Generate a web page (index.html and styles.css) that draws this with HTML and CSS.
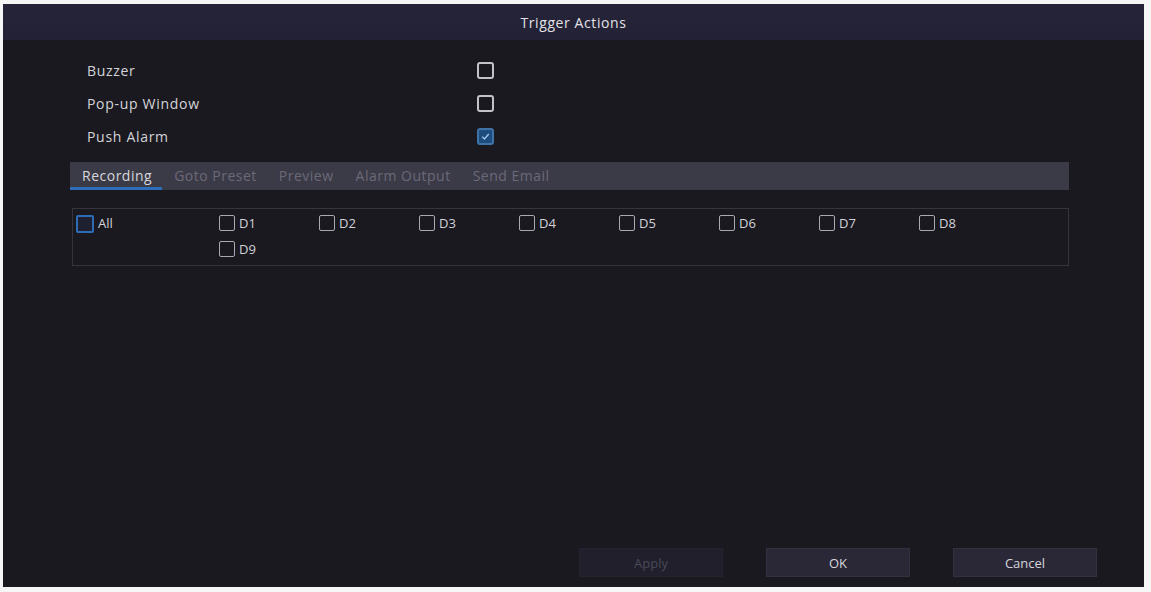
FILE: index.html
```html
<!DOCTYPE html>
<html>
<head>
<meta charset="utf-8">
<link rel="stylesheet" href="styles.css">
</head>
<body>
<div class="panel">
  <div class="header">Trigger Actions</div>
  <div class="content">
    <div class="options">
      <div class="opt-row"><span class="opt-label">Buzzer</span><span class="cb"></span></div>
      <div class="opt-row"><span class="opt-label">Pop-up Window</span><span class="cb"></span></div>
      <div class="opt-row"><span class="opt-label">Push Alarm</span><span class="cb cb-checked"><svg viewBox="0 0 16 16" width="16" height="16"><path d="M4 8.2 L6.8 11 L12 5" fill="none" stroke="#9cc3ea" stroke-width="1.8"/></svg></span></div>
    </div>
    <div class="tabs">
      <div class="tab active">Recording</div>
      <div class="tab">Goto Preset</div>
      <div class="tab">Preview</div>
      <div class="tab">Alarm Output</div>
      <div class="tab">Send Email</div>
    </div>
    <div class="channels">
      <div class="ch-all"><span class="ccb ccb-blue"></span><span class="ch-text">All</span></div>
      <div class="ch-list">
        <div class="ch"><span class="ccb"></span><span class="ch-text">D1</span></div>
        <div class="ch"><span class="ccb"></span><span class="ch-text">D2</span></div>
        <div class="ch"><span class="ccb"></span><span class="ch-text">D3</span></div>
        <div class="ch"><span class="ccb"></span><span class="ch-text">D4</span></div>
        <div class="ch"><span class="ccb"></span><span class="ch-text">D5</span></div>
        <div class="ch"><span class="ccb"></span><span class="ch-text">D6</span></div>
        <div class="ch"><span class="ccb"></span><span class="ch-text">D7</span></div>
        <div class="ch"><span class="ccb"></span><span class="ch-text">D8</span></div>
        <div class="ch"><span class="ccb"></span><span class="ch-text">D9</span></div>
      </div>
    </div>
    <div class="spacer"></div>
    <div class="buttons">
      <div class="btn btn-disabled">Apply</div>
      <div class="btn">OK</div>
      <div class="btn">Cancel</div>
    </div>
  </div>
</div>
</body>
</html>
```
FILE: styles.css
```css
html, body {
  margin: 0;
  padding: 0;
  background: #f6f6f7;
}
body {
  font-family: "Open Sans", "DejaVu Sans", sans-serif;
}
.panel {
  margin: 4px 7px 5px 3px;
  width: 1141px;
  height: 583px;
  background: #1a1920;
  display: flex;
  flex-direction: column;
}
.header {
  height: 36px;
  background: linear-gradient(#262439, #232135);
  color: #e2e2e6;
  font-size: 14px;
  letter-spacing: 0.6px;
  display: flex;
  align-items: center;
  justify-content: center;
}
.content {
  flex: 1;
  display: flex;
  flex-direction: column;
  padding: 14px 75px 10px 67px;
}
.options {
  padding-left: 17px;
}
.opt-row {
  height: 33px;
  display: flex;
  align-items: center;
}
.opt-label {
  width: 390px;
  color: #d4d4d8;
  font-size: 14px;
  letter-spacing: 0.7px;
}
.cb {
  width: 13px;
  height: 13px;
  border: 2px solid #c2c2c8;
  border-radius: 3px;
  box-sizing: content-box;
  display: flex;
}
.cb-checked {
  background: #1d4c7e;
  border-color: #3f73a6;
}
.cb-checked svg {
  width: 13px;
  height: 13px;
}
.tabs {
  margin-top: 9px;
  height: 28px;
  background: #3b3a47;
  display: flex;
}
.tab {
  padding: 2px 10px 0 12px;
  color: #6b6978;
  font-size: 14px;
  letter-spacing: 0.5px;
  display: flex;
  align-items: center;
  border-bottom: 3px solid transparent;
  box-sizing: border-box;
}
.tab.active {
  color: #d6d6dc;
  border-bottom-color: #2f6cba;
}
.channels {
  margin-top: 18px;
  margin-left: 2px;
  height: 58px;
  border: 1px solid #35343f;
  box-sizing: border-box;
  display: flex;
  padding: 5px 0 0 3px;
}
.ch-all {
  width: 143px;
  height: 26px;
  display: flex;
  align-items: flex-start;
}
.ch-list {
  flex: 1;
  display: flex;
  flex-wrap: wrap;
}
.ch {
  width: 100px;
  height: 26px;
  display: flex;
  align-items: flex-start;
}
.ccb {
  width: 14px;
  height: 14px;
  border: 1.5px solid #a9a9b1;
  border-radius: 2px;
  margin-top: 1px;
}
.ccb-blue {
  border-color: #2e6cb8;
  border-width: 2px;
  background: #1c2030;
}
.ch-text {
  margin-left: 4px;
  color: #d2d2d8;
  font-size: 13px;
  line-height: 16px;
  margin-top: 1px;
}
.spacer {
  flex: 1;
}
.buttons {
  display: flex;
  justify-content: flex-end;
  gap: 43px;
  margin-right: -28px;
}
.btn {
  width: 144px;
  height: 29px;
  box-sizing: border-box;
  background: #2a2837;
  border: 1px solid #33313f;
  color: #d6d6dc;
  font-size: 13px;
  display: flex;
  align-items: center;
  justify-content: center;
}
.btn-disabled {
  background: #201f2b;
  border-color: #24232f;
  color: #4b4a58;
}
```
